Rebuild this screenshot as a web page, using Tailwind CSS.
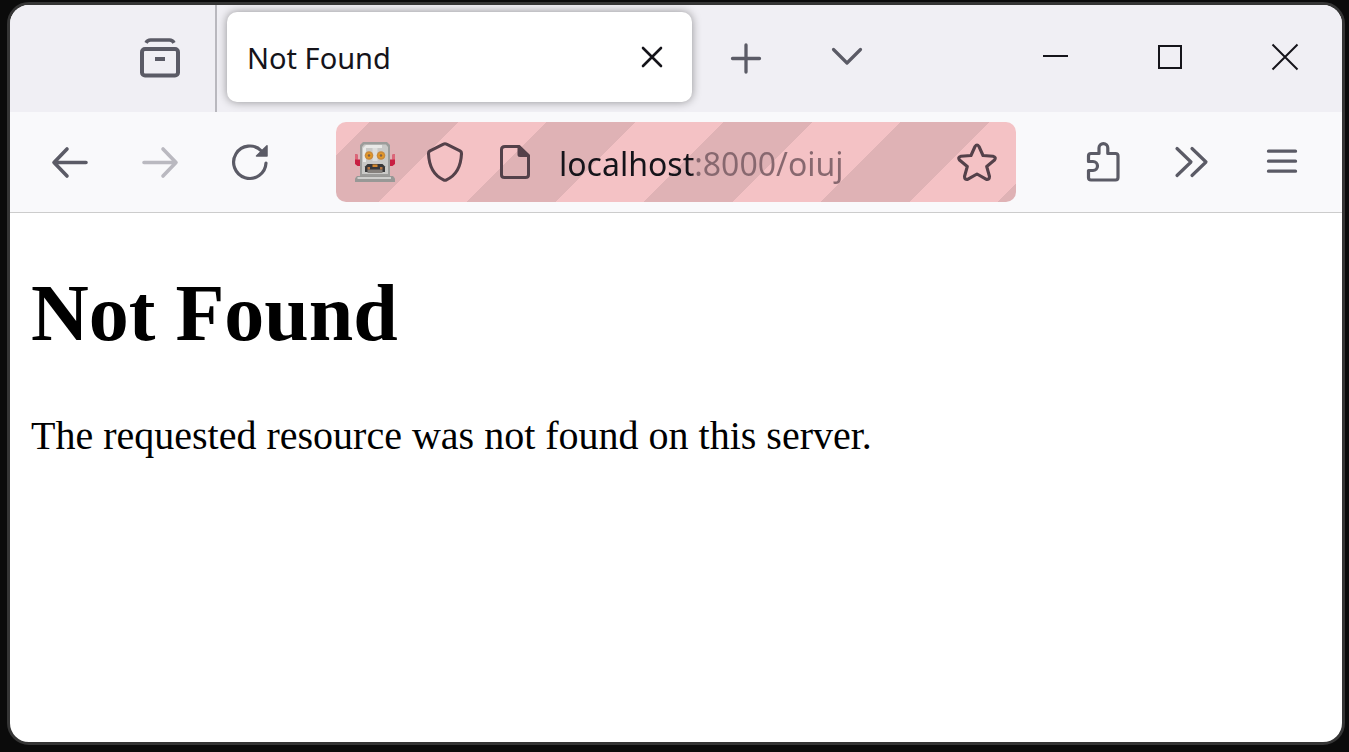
<!DOCTYPE html>
<html lang="en">
<head>
<meta charset="utf-8">
<meta name="viewport" content="width=device-width, initial-scale=1">
<title>Not Found</title>
<script src="https://cdn.jsdelivr.net/npm/@tailwindcss/browser@4"></script>
</head>
<body class="flex min-h-screen bg-[#0b0b0b] pt-0.5 pr-1 pb-[7px] pl-[7px] font-['Noto_Sans',sans-serif] text-[#15141a]">
<div class="flex flex-1 flex-col overflow-hidden rounded-[22px] border-3 border-[#353535] bg-white">

  <!-- Tab strip -->
  <header class="flex h-[107px] items-stretch bg-[#f0eff4] text-[#5b5b66]">
    <div class="flex w-[207px] items-center justify-end border-r-2 border-[#b9b8be] pr-[35px] pb-px">
      <button type="button" aria-label="View recent browsing">
        <svg class="block size-10" viewBox="0 0 40 40" fill="none" stroke="currentColor" stroke-width="4">
          <rect x="2" y="11" width="36" height="26.500" rx="3"/>
          <path d="M6 4.800Q7.500 2 10.500 2H29.500Q32.500 2 34 4.800" stroke-width="3.600"/>
          <path d="M15 21H25"/>
        </svg>
      </button>
    </div>
    <div class="mt-[7px] ml-2.5 flex h-[90px] w-[465px] items-center justify-between rounded-[10px] bg-white px-5 text-[#15141a] shadow-[0_0_10px_rgba(0,0,0,0.4)]">
      <span class="pt-0.5 text-[29px] leading-10">Not Found</span>
      <button type="button" aria-label="Close tab">
        <svg class="block size-10" viewBox="0 0 40 40" fill="none" stroke="currentColor" stroke-width="2.600" stroke-linecap="round"><path d="M11 11L29 29M29 11L11 29"/></svg>
      </button>
    </div>
    <button type="button" aria-label="New tab" class="ml-3.5 flex w-20 items-center justify-center pb-px">
      <svg class="block size-10" viewBox="0 0 40 40" fill="none" stroke="currentColor" stroke-width="3.300" stroke-linecap="round"><path d="M6.500 20.500H33.500M20 7V34"/></svg>
    </button>
    <button type="button" aria-label="List all tabs" class="ml-[21px] flex w-20 items-center justify-center pb-px">
      <svg class="block size-10" viewBox="0 0 40 40" fill="none" stroke="currentColor" stroke-width="3.200" stroke-linecap="round" stroke-linejoin="round"><path d="M6.500 11.500L20 25L33.500 11.500"/></svg>
    </button>
    <div class="ml-auto flex text-[#15141a]">
      <button type="button" aria-label="Minimize" class="flex w-[115px] items-center justify-center pb-px">
        <svg class="block size-10" viewBox="0 0 40 40" fill="none" stroke="currentColor" stroke-width="2"><path d="M8 18H33"/></svg>
      </button>
      <button type="button" aria-label="Maximize" class="flex w-[115px] items-center justify-center pb-px">
        <svg class="block size-10" viewBox="0 0 40 40" fill="none" stroke="currentColor" stroke-width="2"><rect x="9" y="8" width="22" height="22"/></svg>
      </button>
      <button type="button" aria-label="Close window" class="flex w-[115px] items-center justify-center pb-px">
        <svg class="block size-10" viewBox="0 0 40 40" fill="none" stroke="currentColor" stroke-width="2"><path d="M7.500 6.500L32.500 31.500M32.500 6.500L7.500 31.500"/></svg>
      </button>
    </div>
  </header>

  <!-- Navigation toolbar -->
  <nav class="flex h-[101px] items-center border-b border-[#cccccc] bg-[#f9f9fb] px-[15px] text-[#5b5b66]">
    <button type="button" aria-label="Back" class="flex w-[90px] justify-center">
      <svg class="block size-10" viewBox="0 0 40 40" fill="none" stroke="currentColor" stroke-width="3.600" stroke-linecap="round" stroke-linejoin="round"><path d="M17 7L4 20.500L17 34M4 20.500H36"/></svg>
    </button>
    <button type="button" aria-label="Forward" disabled class="flex w-[90px] justify-center text-[#bab9c0]">
      <svg class="block size-10" viewBox="0 0 40 40" fill="none" stroke="currentColor" stroke-width="3.600" stroke-linecap="round" stroke-linejoin="round"><path d="M23 7L36 20.500L23 34M36 20.500H4"/></svg>
    </button>
    <button type="button" aria-label="Reload" class="flex w-[90px] justify-center">
      <svg class="block size-10" viewBox="0 0 40 40" fill="none" stroke="currentColor" stroke-width="3.200" stroke-linecap="round"><path d="M36 21A16.200 16.200 0 1 1 31.500 9"/><path d="M37 3.700V14H26.500Z" fill="currentColor" stroke-width="1.500" stroke-linejoin="round"/></svg>
    </button>
    <div class="mx-[41px] flex h-20 min-w-0 flex-1 items-center rounded-[10px] bg-[linear-gradient(135deg,#dfb2b5_25%,#f4c2c5_25%,#f4c2c5_50%,#dfb2b5_50%,#dfb2b5_75%,#f4c2c5_75%)] bg-[length:177px_177px] bg-[position:34px_0] px-[19px] text-[#54414a]">
      <!-- Robot badge marking a remotely controlled browser -->
      <svg class="size-10 shrink-0" viewBox="0 0 40 40" role="img" aria-label="Browser is under remote control">
        <path d="M0 12.500H2.500V17.500H5V24H2.500L0 22Z" fill="#c81f42"/>
        <path d="M40 12.500H37.500V17.500H35V24H37.500L40 22Z" fill="#c81f42"/>
        <path d="M0 12.500H2.500V17.500H0ZM37.500 12.500H40V17.500H37.500Z" fill="#dd6678"/>
        <path d="M8 0H32L35 3V34H5V3Z" fill="#9c9c9a"/>
        <path d="M9 2.500H31L33 5V32H7V5Z" fill="#c9c9c7"/>
        <path d="M11 3H27V6H11V20H8V6Z" fill="#e9e9e7"/>
        <path d="M17.500 6H22.500V19H17.500Z" fill="#dededc"/>
        <circle cx="14" cy="13.500" r="4.300" fill="#c98a3d"/><circle cx="26" cy="13.500" r="4.300" fill="#c98a3d"/>
        <circle cx="14" cy="13.500" r="2.800" fill="#e79a24"/><circle cx="26" cy="13.500" r="2.800" fill="#e79a24"/>
        <circle cx="14" cy="13.500" r="1.300" fill="#80604a"/><circle cx="26" cy="13.500" r="1.300" fill="#80604a"/>
        <path d="M12.500 22H27.500L30 24.500V30H10V24.500Z" fill="#38383a"/>
        <path d="M17.500 22.500H22.500V25H17.500Z" fill="#d4882f"/>
        <path d="M12.500 27.500H27.500V31H12.500Z" fill="#85807c"/>
        <path d="M12.500 25H15V27.500H12.500ZM25 25H27.500V27.500H25Z" fill="#b97844"/>
        <path d="M2 34H38L40 36.500V40H0V36.500Z" fill="#989896"/><path d="M2.500 35H36V37H2.500Z" fill="#cfcfcd"/>
      </svg>
      <button type="button" aria-label="Tracking protection" class="ml-[30px] shrink-0">
        <svg class="block size-10" viewBox="0 0 40 40" fill="none" stroke="currentColor" stroke-width="3.100" stroke-linejoin="round"><path d="M18.500 2.200Q20 1.300 21.500 2.200L35 8.800Q36.600 9.700 36.500 11.500C36 24 31 33.500 21.500 37.800Q20 38.600 18.500 37.800C9 33.500 4 24 3.500 11.500Q3.400 9.700 5 8.800Z"/></svg>
      </button>
      <button type="button" aria-label="Site information" class="ml-[30px] shrink-0">
        <svg class="block size-10" viewBox="0 0 40 40" fill="none" stroke="currentColor" stroke-width="3" stroke-linejoin="round"><path d="M10 4.500H24L33.500 14V33Q33.500 35.500 30.500 35.500H9.500Q6.500 35.500 6.500 33V7.500Q6.500 4.500 10 4.500Z"/><path d="M24 4.500L33.500 13.500H25Q24 13.500 24 12.500Z" fill="currentColor"/></svg>
      </button>
      <input type="text" aria-label="Address" value="localhost:8000/oiuj" spellcheck="false" class="ml-6 h-14 min-w-0 flex-1 bg-[linear-gradient(90deg,#15141a_137px,#87686f_137px)] bg-clip-text pt-0.5 text-[32px] text-transparent outline-none">
      <button type="button" aria-label="Bookmark this page" class="shrink-0">
        <svg class="block size-10" viewBox="0 0 40 40" fill="none" stroke="currentColor" stroke-width="3.100" stroke-linejoin="round"><path d="M18 4.500Q20 1.500 22 4.500L26 13.500L36 14.300Q39.500 15.200 37.500 18L29.700 24.500L32.500 34.500Q32.500 38 29 37.200L20 32L11 37.200Q7.500 38 7.500 34.500L10.300 24.500L2.500 18Q0.500 15.200 4 14.300L14 13.500Z"/></svg>
      </button>
    </div>
    <button type="button" aria-label="Extensions" class="flex w-[90px] justify-center">
      <svg class="block size-10" viewBox="0 0 40 40" fill="none" stroke="currentColor" stroke-width="3.200" stroke-linejoin="round"><path d="M6.500 19.500V14Q6.500 11.500 9 11.500H17V6A4.400 4.400 0 0 1 25.800 6V11.500H33.500Q36 11.500 36 14V35.500Q36 38 33.500 38H9Q6.500 38 6.500 35.500V28.500H11A4.500 4.500 0 0 0 11 19.500Z"/></svg>
    </button>
    <button type="button" aria-label="More tools" class="flex w-[90px] justify-center">
      <svg class="block size-10" viewBox="0 0 40 40" fill="none" stroke="currentColor" stroke-width="3.200" stroke-linecap="round" stroke-linejoin="round"><path d="M5 6.500L19 20L5 33.500M20 6.500L34 20L20 33.500"/></svg>
    </button>
    <button type="button" aria-label="Application menu" class="flex w-[90px] justify-center">
      <svg class="block size-10" viewBox="0 0 40 40" fill="none" stroke="currentColor" stroke-width="3.300" stroke-linecap="round"><path d="M6.500 9.200H33.500M6.500 19.200H33.500M6.500 29.200H33.500"/></svg>
    </button>
  </nav>

  <!-- Page -->
  <main class="flex-1 px-[21px] pt-[54px] font-['Liberation_Serif',serif] text-black">
    <h1 class="text-[80px] leading-[92px] font-bold">Not Found</h1>
    <p class="mt-[54px] text-[40px] leading-[46px]">The requested resource was not found on this server.</p>
  </main>
</div>
</body>
</html>
